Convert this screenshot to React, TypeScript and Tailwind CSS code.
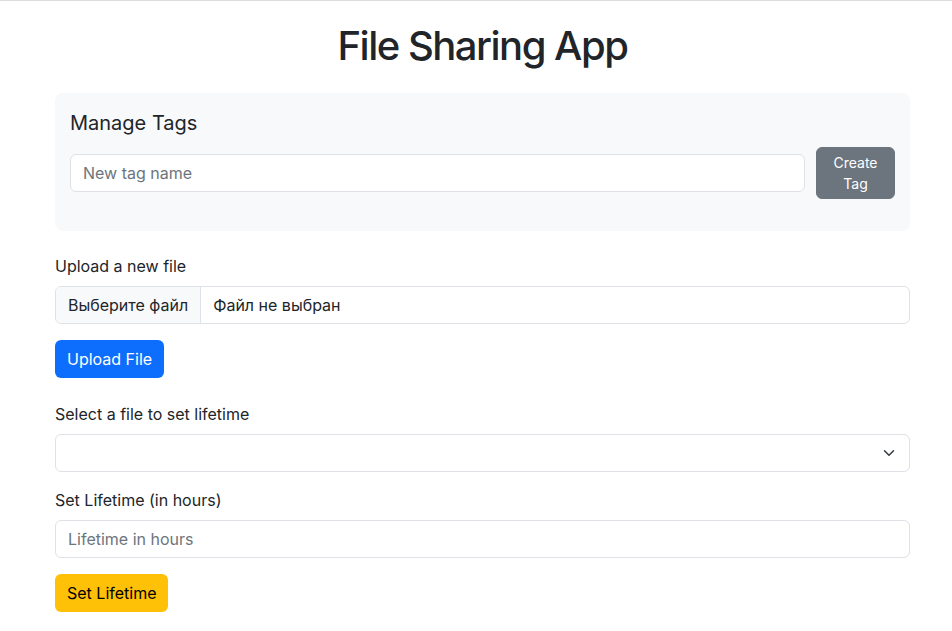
import React from 'react';

const font = { fontFamily: 'Inter, "Noto Sans", sans-serif' };

const Label = ({ children }: { children: React.ReactNode }) => (
  <label className="block text-[16px] leading-[24px] text-[#212529] mb-2">{children}</label>
);

const App = () => {
  return (
    <div className="min-h-[631px] bg-white text-[#212529]" style={font}>
      <div className="h-px bg-[#dcdcdc]" />
      <div className="ml-[55px] w-[855px] pt-[21px]">
        <h1 className="text-center text-[40px] leading-[48px] font-medium tracking-[-1.5px] mb-[23px]">
          File Sharing App
        </h1>

        {/* tags card */}
        <div className="bg-[#f8f9fa] rounded-lg px-[15px] py-4 mb-[23px]">
          <h5 className="text-[20px] leading-[24px] font-normal mt-[2px] mb-[12px]">Manage Tags</h5>
          <div className="flex items-center gap-[11px] mb-4">
            <input
              className="flex-1 h-[38px] px-3 bg-white border border-[#dee2e6] rounded-md text-[16px] placeholder:text-[#6c757d] outline-none"
              placeholder="New tag name"
            />
            <button className="w-[79px] py-1 px-2 bg-[#6c757d] border border-[#6c757d] text-white text-[14px] leading-[21px] rounded-md">
              Create Tag
            </button>
          </div>
        </div>

        <Label>Upload a new file</Label>
        <div className="flex h-[38px] border border-[#dee2e6] rounded-md overflow-hidden mb-4 text-[16px]">
          <div className="bg-[#f8f9fa] border-r border-[#dee2e6] px-3 flex items-center">Выберите файл</div>
          <div className="px-3 flex items-center">Файл не выбран</div>
        </div>
        <button className="h-[38px] px-3 bg-[#0d6efd] text-white text-[16px] rounded-md mb-6">Upload File</button>

        <Label>Select a file to set lifetime</Label>
        <div className="relative h-[38px] border border-[#dee2e6] rounded-md mb-4">
          <svg className="absolute right-3 top-[12px]" width="16" height="12" viewBox="0 0 16 16" fill="none">
            <path d="m2 5 6 6 6-6" stroke="#343a40" strokeWidth="2" strokeLinecap="round" strokeLinejoin="round" />
          </svg>
        </div>

        <Label>Set Lifetime (in hours)</Label>
        <input
          className="block w-full h-[38px] px-3 border border-[#dee2e6] rounded-md text-[16px] placeholder:text-[#6c757d] outline-none mb-4"
          placeholder="Lifetime in hours"
        />
        <button className="h-[38px] px-3 bg-[#ffc107] text-black text-[16px] rounded-md">Set Lifetime</button>
      </div>
    </div>
  );
};

export default App;
